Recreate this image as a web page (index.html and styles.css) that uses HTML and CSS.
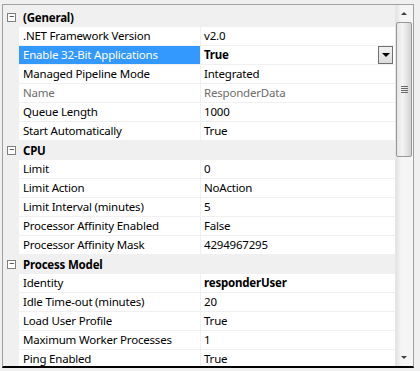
FILE: index.html
```html
<!DOCTYPE html>
<html lang="en">
<head>
    <meta charset="UTF-8">
    <title>Application Pool Properties</title>
    <link rel="stylesheet" href="styles.css">
</head>
<body>
    <div class="panel">
        <div class="rows">
            <!-- General -->
            <div class="cat"><span class="toggle">&minus;</span>(General)</div>
            <div class="prop"><div class="name">.NET Framework Version</div><div class="value">v2.0</div></div>
            <div class="prop selected"><div class="name">Enable 32-Bit Applications</div><div class="value bold">True<span class="drop"></span></div></div>
            <div class="prop"><div class="name">Managed Pipeline Mode</div><div class="value">Integrated</div></div>
            <div class="prop readonly"><div class="name">Name</div><div class="value">ResponderData</div></div>
            <div class="prop"><div class="name">Queue Length</div><div class="value">1000</div></div>
            <div class="prop"><div class="name">Start Automatically</div><div class="value">True</div></div>

            <!-- CPU -->
            <div class="cat"><span class="toggle">&minus;</span>CPU</div>
            <div class="prop"><div class="name">Limit</div><div class="value">0</div></div>
            <div class="prop"><div class="name">Limit Action</div><div class="value">NoAction</div></div>
            <div class="prop"><div class="name">Limit Interval (minutes)</div><div class="value">5</div></div>
            <div class="prop"><div class="name">Processor Affinity Enabled</div><div class="value">False</div></div>
            <div class="prop"><div class="name">Processor Affinity Mask</div><div class="value">4294967295</div></div>

            <!-- Process Model -->
            <div class="cat"><span class="toggle">&minus;</span>Process Model</div>
            <div class="prop"><div class="name">Identity</div><div class="value bold">responderUser</div></div>
            <div class="prop"><div class="name">Idle Time-out (minutes)</div><div class="value">20</div></div>
            <div class="prop"><div class="name">Load User Profile</div><div class="value">True</div></div>
            <div class="prop"><div class="name">Maximum Worker Processes</div><div class="value">1</div></div>
            <div class="prop"><div class="name">Ping Enabled</div><div class="value">True</div></div>
        </div>
        <div class="scrollbar">
            <div class="arrow up"></div>
            <div class="track">
                <div class="thumb"><span class="grip"></span></div>
            </div>
            <div class="arrow down"></div>
        </div>
    </div>
</body>
</html>
```

FILE: styles.css
```css
body{
    margin: 0;
    background-color: #f0f0f0;
    font-family: "Noto Sans", sans-serif;
    font-size: 11.5px;
    letter-spacing: -0.2px;
    color: #000;
}

div.panel{
    display: flex;
    margin: 4px 0 0 2px;
    width: 410px;
    height: 361px;
    border: 1px solid #a0a0a0;
    border-bottom: 2px solid #000;
    background-color: #f0f0f0;
    overflow: hidden;
}

div.rows{
    flex: 1;
    padding-top: 3px;
}

div.cat{
    display: flex;
    align-items: center;
    height: 19px;
    font-weight: bold;
}
span.toggle{
    box-sizing: border-box;
    width: 9px;
    height: 9px;
    margin: 0 7px 0 4px;
    border: 1px solid #7f7f7f;
    background-color: #fff;
    font-size: 9px;
    line-height: 6px;
    text-align: center;
    font-weight: normal;
    letter-spacing: 0;
}

div.prop{
    display: flex;
    height: 18px;
    margin-left: 16px;
    border-bottom: 1px solid #f0f0f0;
    background-color: #fff;
    line-height: 18px;
}
div.prop .name{
    width: 177px;
    padding-left: 4px;
    border-right: 1px solid #f0f0f0;
    white-space: nowrap;
}
div.prop .value{
    flex: 1;
    position: relative;
    padding-left: 3px;
    white-space: nowrap;
}
div.selected .name{
    background-color: #3399ff;
    color: #fff;
}
div.readonly{
    color: #6d6d6d;
}
.bold{
    font-weight: bold;
}

span.drop{
    position: absolute;
    right: 2px;
    top: 0;
    width: 13px;
    height: 16px;
    border: 1px solid #707070;
    background: linear-gradient(#f2f2f2, #dcdcdc);
}
span.drop::after{
    content: "";
    position: absolute;
    left: 3px;
    top: 6px;
    border-left: 4px solid transparent;
    border-right: 4px solid transparent;
    border-top: 4px solid #000;
}

div.scrollbar{
    display: flex;
    flex-direction: column;
    width: 17px;
    border-left: 1px solid #e6e6e6;
    background: linear-gradient(to right, #e3e3e3, #f5f5f5 30%, #f5f5f5);
}
div.arrow{
    height: 17px;
    position: relative;
}
div.arrow::after{
    content: "";
    position: absolute;
    left: 5px;
    border-left: 3px solid transparent;
    border-right: 3px solid transparent;
}
div.up::after{
    top: 7px;
    border-bottom: 3px solid #404040;
}
div.down::after{
    top: 7px;
    border-top: 3px solid #404040;
}
div.track{
    flex: 1;
}
div.thumb{
    display: flex;
    align-items: center;
    justify-content: center;
    height: 133px;
    margin: 0 1px 0 0;
    border: 1px solid #979797;
    border-radius: 2px;
    background: linear-gradient(to right, #e6e6e6, #f4f4f4 40%, #d2d2d2);
}
span.grip{
    width: 7px;
    height: 7px;
    background: repeating-linear-gradient(#6a6a6a 0 1px, transparent 1px 2px);
}
```
